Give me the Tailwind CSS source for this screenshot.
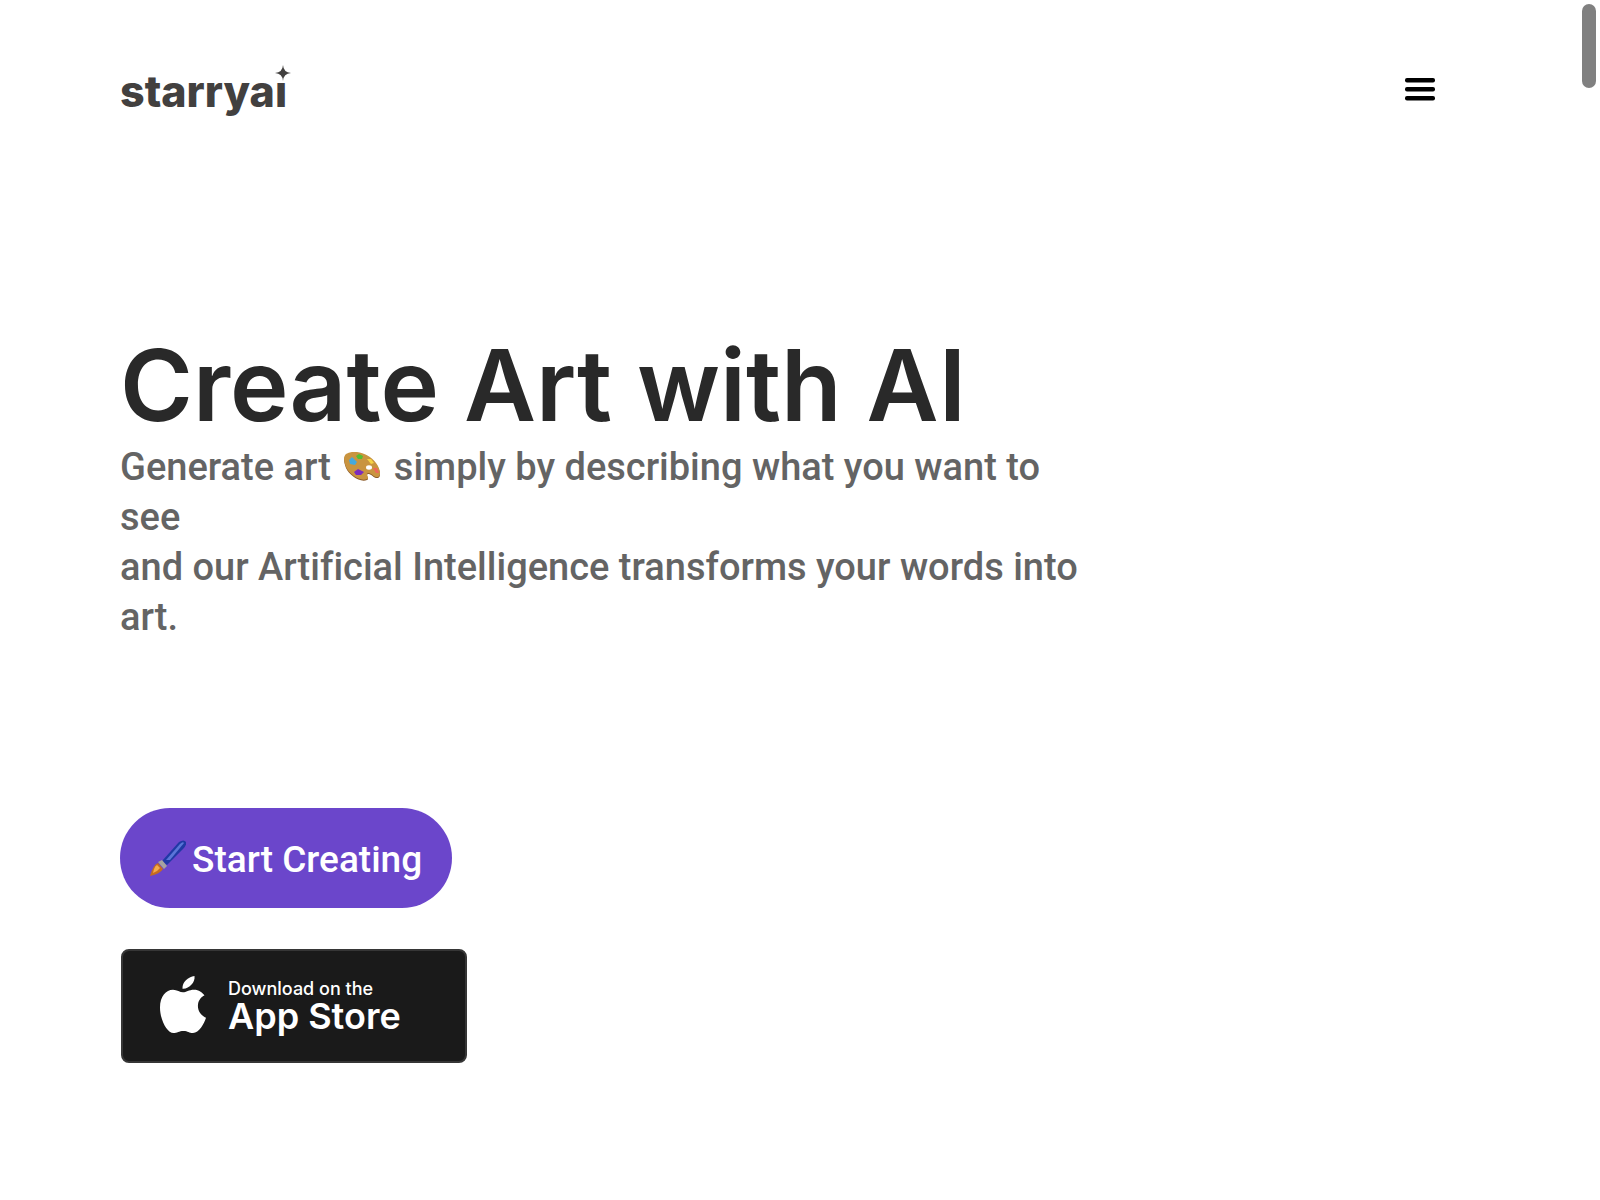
<!DOCTYPE html>
<html lang="en">
<head>
<meta charset="utf-8">
<meta name="viewport" content="width=device-width, initial-scale=1">
<title>starryai</title>
<script src="https://cdn.jsdelivr.net/npm/@tailwindcss/browser@4"></script>
</head>
<body class="bg-white font-['Inter',sans-serif] overflow-hidden">
<header class="flex items-start justify-between pt-16 pl-[120px] pr-40">
  <a href="#" class="relative block text-[43px] leading-[54px] font-extrabold text-[#42403f]">starryai<svg class="absolute -right-1 top-0 size-[19px] bg-white" viewBox="0 0 19 19" fill="#42403f" aria-hidden="true"><path d="M11 1Q11.500 8.500 19 9Q11.500 9.500 11 17Q10.500 9.500 3 9Q10.500 8.500 11 1Z"/></svg></a>
  <button type="button" aria-label="Menu" class="mt-2 p-[5px]">
    <svg class="block h-[24px] w-[30px]" viewBox="0 0 30 24"><g fill="#000"><rect y="1" width="30" height="4.500" rx="2"/><rect y="10" width="30" height="4.500" rx="2"/><rect y="19" width="30" height="4.500" rx="2"/></g></svg>
  </button>
</header>
<main class="px-[120px] pt-[210px]">
  <h1 class="text-[99px] leading-[114px] font-semibold text-[#292929]">Create Art with AI</h1>
  <p class="max-w-[980px] font-['Roboto',sans-serif] text-[38px] leading-[50px] font-medium text-[#646464] [font-variant-ligatures:none]">Generate art <svg class="mx-1 inline-block h-[30px] w-9 align-[-2px]" viewBox="0 0 36 30" role="img" aria-label="palette"><path d="M2 3C10-2 25 2 32 12C37 19 37 25 34 26C30 27 27 21 24 22C21 23 26 27 23 28C16 31 5 23 2 16C0 11-1 6 2 3Z" fill="#8b5a28"/><path d="M2 2C10-3 25 1 32 11C37 18 37 24 34 25C30 26 27 20 24 21C21 22 26 26 23 27C16 30 5 22 2 15C0 10-1 5 2 2Z" fill="#c9943f"/><ellipse cx="25" cy="15.500" rx="3" ry="2.200" fill="#fff"/><path d="M5 8L8 5L13 10L11 13L6 12Z" fill="#43a9dd"/><path d="M12 4L15 2L19 4L18 7L14 7Z" fill="#55bd30"/><path d="M23 7L27 7L30 11L27 12Z" fill="#f4d345"/><path d="M10 20L14 17L20 20L17 23L12 23Z" fill="#7b2cbd"/><path d="M29 16L33 16L35 21L32 21Z" fill="#ed6659"/></svg> simply by describing what you want to see<br>and our Artificial Intelligence transforms your words into art.</p>
  <div class="flex flex-col items-start gap-[41px] pt-[166px]">
    <button type="button" class="flex h-[100px] items-center gap-[6px] rounded-full bg-[#6b46cb] px-[30px] font-['Roboto',sans-serif] text-[37px] font-medium text-white">
      <svg class="size-9" viewBox="0 0 36 36" aria-hidden="true"><path d="M12 21L29 2Q34-1 36 2Q37 5 33 9L17 25Z" fill="#2039a5"/><path d="M16 20L30 4Q33 1 34 3L20 20Z" fill="#5a75d8"/><path d="M8 22L12 20L17 26L14 29Z" fill="#a5a39f"/><path d="M8 23L13 29Q10 34 0 36Q3 25 8 23Z" fill="#c66c20"/><path d="M7 25L10 28Q7 32 3 33Q4 27 7 25Z" fill="#f5ab4c"/></svg>
      <span class="pt-1">Start Creating</span>
    </button>
    <a href="#" class="ml-px flex h-[114px] w-[346px] items-center gap-[22px] rounded-lg border-2 border-[#363636] bg-[#1a1a1a] pb-1 pl-[37px] text-white">
      <svg class="h-[57px] w-[46px]" viewBox="0 0 46 56" preserveAspectRatio="none" fill="#fff" aria-hidden="true"><path d="M34.500 0C35.500 6 29 13 22.500 12.500C22 6 28 1 34.500 0Z"/><path d="M23 16C26 16 29 13.500 34 13.500C39 13.500 42 16 44.500 19C35 24 36 37 46 41C44 47 39 56 33 56C29 56 28 54 23.500 54C19 54 17 56 13.500 56C7 56 0 43 0 31C0 20 6 13.500 13 13.500C17 13.500 20 16 23 16Z"/></svg>
      <span class="flex flex-col pt-1">
        <span class="text-[18px] leading-5 font-medium">Download on the</span>
        <span class="text-[36px] leading-[34px] font-semibold">App Store</span>
      </span>
    </a>
  </div>
</main>
<div class="fixed top-1 right-1 h-[84px] w-[14px] rounded-full bg-[#808080]" aria-hidden="true"></div>
</body>
</html>
